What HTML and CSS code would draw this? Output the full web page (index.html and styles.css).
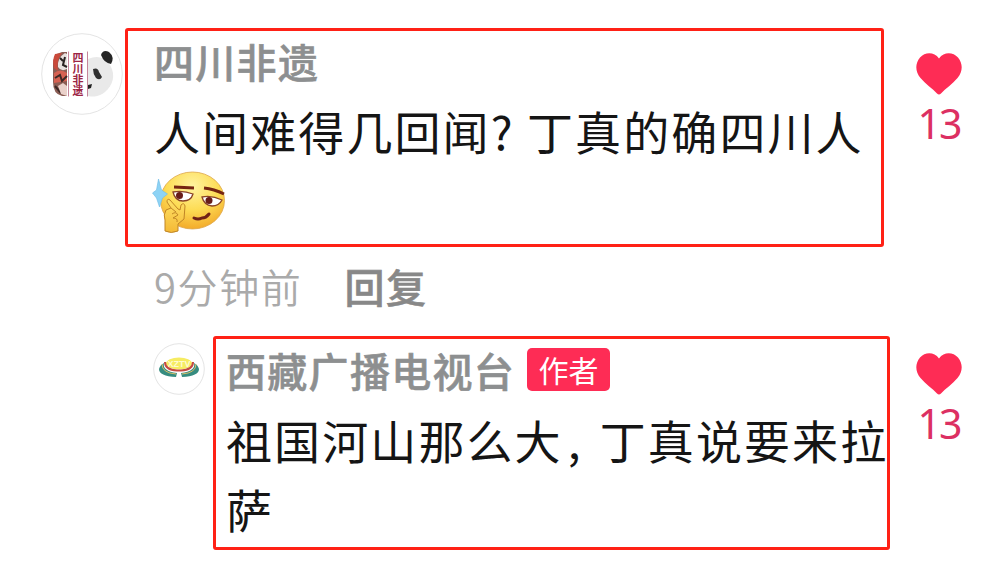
FILE: index.html
```html
<!DOCTYPE html>
<html lang="zh-CN">
  <head>
    <meta charset="UTF-8">
    <meta name="viewport" content="width=device-width, initial-scale=1.0">
    <title>评论</title>
    <link rel="stylesheet" href="styles.css">
  </head>
  <body>
    <!-- Top level comment -->
    <div class="comment">
      <svg class="avatar" viewBox="0 0 82 82">
        <circle cx="41" cy="41" r="40.3" fill="#fff" stroke="#e4e4e4"/>
        <path d="M26 19h-5q-9 2-9 12v18q0 12 9 14h5z" fill="#8a5d54"/>
        <path d="M24 20q-8 5-7 14 3 5 9 2V21z" fill="#e8e2df"/>
        <path d="M14 21q-3 6-1 14l4 3q-2-11 4-18z" fill="#c9493a"/>
        <path d="M19 25l3 3M24 24l-2 8 4 2" fill="none" stroke="#292321" stroke-width="2"/>
        <path d="M13 40q6-5 13 0v8l-13 2z" fill="#d66152"/>
        <path d="M14 45l5-3 2 6 5-5M14 53l6 7" fill="none" stroke="#3c2825" stroke-width="2"/>
        <path d="M17 53l5-3 4 3v10l-6-2z" fill="#ead1ca"/>
        <path d="M47 26q14-6 22 6c6 10 3 20-5 27-7 5-11 5-17 4z" fill="#e9e9e9"/>
        <path d="M60 22q2-6 8-3 6 5 2 12-7-1-10-9z" fill="#252525"/>
        <path d="M52 36q5-2 6 3l3 5q-2 4-6 1-3-4-3-9z" fill="#303030"/>
        <path d="M47 52l4-1-1 4-3 1z" fill="#222"/>
        <path d="M27.500 18.500v45M46.500 18.500v45" stroke="#c5869a"/>
        <g class="seal">
          <text x="37" y="28.500">四</text>
          <text x="37" y="39.500">川</text>
          <text x="37" y="50.500">非</text>
          <text x="37" y="61.500">遗</text>
        </g>
      </svg>
      <div class="box">
        <div class="name">四川非遗</div>
        <p class="text">人间难得几回闻? 丁真的确四川人<svg class="emoji" viewBox="0 0 76 66">
            <defs>
              <radialGradient id="face" cx="50%" cy="25%" r="75%">
                <stop offset="0" stop-color="#fff3a0"/>
                <stop offset=".55" stop-color="#fddc55"/>
                <stop offset="1" stop-color="#f3ab2b"/>
              </radialGradient>
              <linearGradient id="hand" x1="0" y1="0" x2="0" y2="1">
                <stop offset="0" stop-color="#ffe268"/>
                <stop offset="1" stop-color="#f4b935"/>
              </linearGradient>
            </defs>
            <ellipse cx="40.500" cy="31.500" rx="32" ry="28.500" fill="url(#face)" stroke="#dda64b" stroke-width=".8"/>
            <path d="M22 18l20 1M52 19q10 1 20 6" fill="none" stroke="#762511" stroke-width="3"/>
            <path d="M21 23q10-2 20 2-2 7-10 7-8 0-10-9zM50 28q10-2 20 3-3 6-10 6-8-1-10-9z" fill="#fff" stroke="#8a4326" stroke-width="1.300"/>
            <circle cx="27.500" cy="26.500" r="3.500" fill="#671c18"/>
            <circle cx="57" cy="31.500" r="3.500" fill="#671c18"/>
            <path d="M42 49q4 2 8 0 4 0 7-4" fill="none" stroke="#702116" stroke-width="3" stroke-linecap="round"/>
            <path d="M13 62V51q-2-5 1-10l5-2-4-6q0-4 3-2l8 9 2 1 1-5q3-3 4 1l-1 13-6 5v7q-7 3-13 0z" fill="url(#hand)" stroke="#c08526" stroke-width="1"/>
            <path d="M19 39l5 4M20 45q4-3 6 1l-5 3q5 0 4 4" fill="none" stroke="#c08526"/>
            <path d="M6.500 10l3 11 6 4-5 4-3 9-3-9-4-5 4-3z" fill="#8dd3f5" stroke="#6bbbe5" stroke-width=".6"/>
          </svg></p>
      </div>
      <div class="like">
        <svg class="heart" viewBox="0 0 46 42">
          <path d="M23 5.500C28-1.500 37-1 42 4.500c5 6 5 14-.5 20.500-5 6-12 10.500-16.500 15.500q-2 2-4 0C16.500 35.500 9.500 31 4.500 25-1 18.500-1 10.500 4 4.500 9-1 18-1.500 23 5.500z"/>
        </svg>
        <span>13</span>
      </div>
    </div>

    <div class="meta">
      <span class="time">9分钟前</span>
      <span class="answer">回复</span>
    </div>

    <!-- Author reply -->
    <div class="comment reply">
      <svg class="avatar" viewBox="0 0 52 52">
        <circle cx="26" cy="26" r="25.300" fill="#fff" stroke="#e4e4e4"/>
        <ellipse cx="26" cy="20.500" rx="13" ry="6" fill="#f6ec62"/>
        <text class="logo-text" x="26" y="23.500">XZTV</text>
        <path d="M11 20Q9 28 24 30l-1 4Q6 33 6 26q1-4 5-6z" fill="#368c80"/>
        <path d="M41 20q2 8-13 10l1 4q17-1 17-8-1-4-5-6z" fill="#368c80"/>
        <path d="M12 19q0 8 12 8.500h4q12-.5 12-8.500" fill="none" stroke="#c44a43" stroke-width="2"/>
        <path d="M9 21q0 9 14 10M43 21q0 9-14 10" fill="none" stroke="#d7bd68"/>
      </svg>
      <div class="box">
        <div class="name">西藏广播电视台<span class="badge">作者</span></div>
        <p class="text">祖国河山那么大<span class="comma">,</span>丁真说要来拉萨</p>
      </div>
      <div class="like">
        <svg class="heart" viewBox="0 0 46 42">
          <path d="M23 5.500C28-1.500 37-1 42 4.500c5 6 5 14-.5 20.500-5 6-12 10.500-16.500 15.500q-2 2-4 0C16.500 35.500 9.500 31 4.500 25-1 18.500-1 10.500 4 4.500 9-1 18-1.500 23 5.500z"/>
        </svg>
        <span>13</span>
      </div>
    </div>
  </body>
</html>
```
FILE: styles.css
```css
* {
  box-sizing: border-box;
}

body {
  font-family: "Noto Sans CJK SC", sans-serif;
  background: #fff;
  color: #151515;
  margin: 0;
  padding: 28px 0 0 41px;
  height: 568px;
  overflow: hidden;
}

/* Comments */
.comment {
  display: flex;
  align-items: flex-start;
}

.avatar {
  width: 82px;
  height: 82px;
  margin: 5px 2px 0 0;
  flex-shrink: 0;
}

.seal {
  font-size: 11px;
  font-weight: 700;
  fill: #9c2545;
  text-anchor: middle;
}

.box {
  width: 759px;
  height: 219px;
  flex-shrink: 0;
  border: 3px solid #ff2116;
  border-radius: 3px;
  padding: 0 0 0 26px;
}

.name {
  display: flex;
  align-items: center;
  height: 60px;
  font-size: 40px;
  font-weight: 500;
  letter-spacing: 1.3px;
  color: #8d8f90;
  -webkit-text-stroke: 0.6px #8d8f90;
}

.text {
  margin: 5px -3px 0 0;
  font-size: 46px;
  line-height: 69px;
  letter-spacing: 2.1px;
}

.emoji {
  display: block;
  width: 76px;
  height: 66px;
  margin: 4px 0 0 -2px;
}

.like {
  width: 46px;
  margin: 25px 0 0 32px;
  display: flex;
  flex-direction: column;
  align-items: center;
  color: #dc3062;
  font-family: "Noto Sans", sans-serif;
  font-size: 41px;
  line-height: 56px;
  letter-spacing: -2px;
}

.heart {
  width: 46px;
  height: 42px;
  fill: #fe2c55;
}

/* Time and reply link */
.meta {
  display: flex;
  gap: 42px;
  height: 60px;
  margin: 9px 0 0 113px;
  font-size: 40px;
  line-height: 60px;
  letter-spacing: 1.6px;
}

.time {
  font-weight: 350;
  color: #aaa;
}

.answer {
  font-weight: 500;
  color: #888;
  -webkit-text-stroke: 0.6px #888;
}

/* Reply */
.reply {
  margin: 20px 0 0 112px;
}

.reply .avatar {
  width: 52px;
  height: 52px;
  margin: 7px 8px 0 0;
}

.logo-text {
  font: 700 9px "Liberation Sans", sans-serif;
  fill: #fffbd0;
  text-anchor: middle;
}

.reply .box {
  width: 677px;
  height: 214px;
  padding: 1px 0 0 10px;
}

.badge {
  width: 83px;
  height: 43px;
  margin: -1px 0 0 12px;
  border-radius: 5px;
  background: #fe2c55;
  color: #fff;
  font-size: 30px;
  font-weight: 400;
  line-height: 43px;
  letter-spacing: 0;
  text-align: center;
  -webkit-text-stroke: 0;
}

.comma {
  display: inline-block;
  width: 37px;
  padding-left: 5px;
}

.reply .like {
  margin: 17px 0 0 26px;
}
```
